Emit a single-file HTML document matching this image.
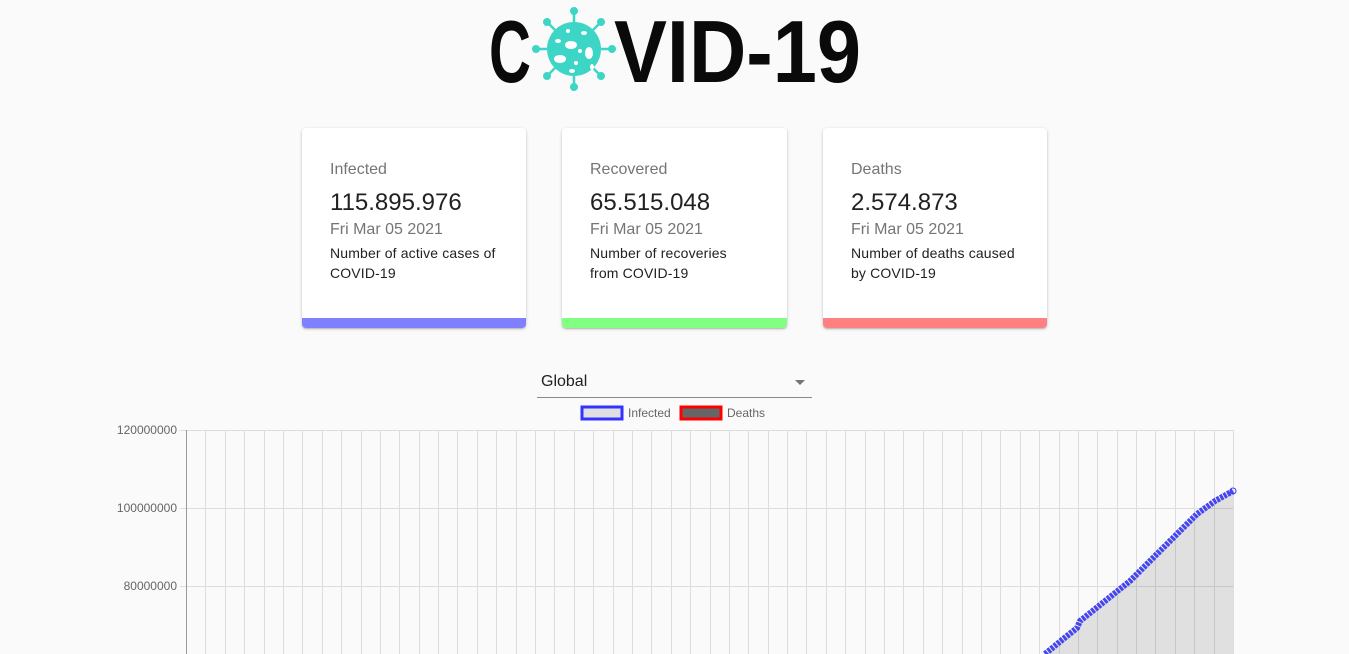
<!DOCTYPE html>
<html><head><meta charset="utf-8"><style>
body{margin:0;background:#fafafa;font-family:"Liberation Sans",sans-serif;width:1349px;height:654px;overflow:hidden;position:relative}
.card{position:absolute;top:128px;width:224px;height:200px;background:#fff;border-radius:4px;box-shadow:0 1px 3px rgba(0,0,0,.2),0 1px 1px rgba(0,0,0,.14);overflow:hidden}
.card .in{padding:33px 28px 0 28px}
.t{color:#757575;font-size:16px;margin-bottom:10px}
.n{color:#212121;font-size:24px;margin-bottom:4px}
.d{color:#757575;font-size:16px;margin-bottom:4px}
.p{color:#212121;font-size:14px;line-height:20px;letter-spacing:.15px;white-space:nowrap}
.bar{position:absolute;left:0;right:0;bottom:0;height:10px}
</style></head><body>
<svg style="position:absolute;left:0;top:0" width="1349" height="100">
<text x="489" y="82" font-family="Liberation Sans Narrow, Liberation Sans, sans-serif" font-weight="bold" font-size="88" textLength="42" lengthAdjust="spacingAndGlyphs" fill="#0a0a0a">C</text>
<text x="614" y="82" font-family="Liberation Sans Narrow, Liberation Sans, sans-serif" font-weight="bold" font-size="88" textLength="247" lengthAdjust="spacingAndGlyphs" fill="#0a0a0a">VID-19</text>
<g transform="translate(574,49)" fill="#3dd6c6" stroke="#3dd6c6">
<circle r="27" stroke="none"/>
<g stroke-width="2.5">
<line x1="0" y1="-27" x2="0" y2="-37"/><line x1="0" y1="27" x2="0" y2="37"/>
<line x1="-27" y1="0" x2="-37" y2="0"/><line x1="27" y1="0" x2="37" y2="0"/>
<line x1="19" y1="19" x2="26" y2="26"/><line x1="-19" y1="19" x2="-26" y2="26"/>
<line x1="19" y1="-19" x2="26" y2="-26"/><line x1="-19" y1="-19" x2="-26" y2="-26"/>
</g>
<circle cx="0" cy="-38" r="3.5"/><circle cx="0" cy="38" r="3.5"/><circle cx="-38" cy="0" r="3.5"/><circle cx="38" cy="0" r="3.5"/>
<circle cx="27" cy="27" r="3.5"/><circle cx="-27" cy="27" r="3.5"/><circle cx="27" cy="-27" r="3.5"/><circle cx="-27" cy="-27" r="3.5"/>
<g fill="#fff" stroke="none">
<ellipse cx="-3" cy="-4" rx="6" ry="4"/><ellipse cx="-16" cy="-8" rx="3" ry="2"/><ellipse cx="10" cy="-16" rx="3" ry="2"/>
<ellipse cx="15" cy="4" rx="4" ry="6"/><ellipse cx="-14" cy="10" rx="6" ry="4"/><ellipse cx="2" cy="14" rx="2" ry="2"/>
<ellipse cx="-6" cy="-18" rx="2" ry="2"/><ellipse cx="6" cy="2" rx="2" ry="2"/><ellipse cx="-2" cy="22" rx="3" ry="2"/><ellipse cx="18" cy="18" rx="2" ry="3"/>
</g></g>
</svg>
<div class="card" style="left:302px"><div class="in"><div class="t">Infected</div><div class="n">115.895.976</div><div class="d">Fri Mar 05 2021</div><div class="p">Number of active cases of<br>COVID-19</div></div><div class="bar" style="background:#8080ff"></div></div>
<div class="card" style="left:562px;width:225px"><div class="in"><div class="t">Recovered</div><div class="n">65.515.048</div><div class="d">Fri Mar 05 2021</div><div class="p">Number of recoveries<br>from COVID-19</div></div><div class="bar" style="background:#80ff80"></div></div>
<div class="card" style="left:823px"><div class="in"><div class="t">Deaths</div><div class="n">2.574.873</div><div class="d">Fri Mar 05 2021</div><div class="p">Number of deaths caused<br>by COVID-19</div></div><div class="bar" style="background:#ff8080"></div></div>
<div style="position:absolute;left:537px;top:373px;width:275px;height:25px;border-bottom:1px solid #8a8a8a;font-size:16px;color:#212121;padding-left:4px;box-sizing:border-box">Global
<div style="position:absolute;right:7px;top:7px;width:0;height:0;border-left:5px solid transparent;border-right:5px solid transparent;border-top:5px solid #757575"></div></div>
<svg style="position:absolute;left:0;top:400px" width="1349" height="254" font-family="Liberation Sans, sans-serif" font-size="12" fill="#666">
<rect x="582" y="7" width="40" height="12" fill="#e0e0e0" stroke="#3333ff" stroke-width="3"/>
<text x="628" y="17">Infected</text>
<rect x="681" y="7" width="40" height="12" fill="#666" stroke="#ff0000" stroke-width="3"/>
<text x="727" y="17">Deaths</text>
<g id="g" stroke="#ddd" stroke-width="1"></g>
<text x="177" y="34" text-anchor="end">120000000</text>
<text x="177" y="112" text-anchor="end">100000000</text>
<text x="177" y="190" text-anchor="end">80000000</text>
<path d="M1045,254 L1062,240 L1077,228 L1080,221 L1105,201 L1130,181 L1157,154 L1177,134 L1197,114 L1215,101 L1233,91 L1233,254 Z" fill="rgba(0,0,0,0.1)"/>
<path d="M1045,254 L1062,240 L1077,228 L1080,221 L1105,201 L1130,181 L1157,154 L1177,134 L1197,114 L1215,101 L1233,91" fill="none" stroke="#4646ee" stroke-width="6" stroke-dasharray="3 1"/>
<circle cx="1233" cy="91" r="3" fill="none" stroke="#3a3aee"/>
<line x1="186.5" y1="30" x2="186.5" y2="254" stroke="#999"/>
</svg>
<script>
var g=document.getElementById('g'),s='';
for(var i=1;i<=54;i++){var x=Math.round(186+i*1047/54)+.5;s+='<line x1="'+x+'" y1="30" x2="'+x+'" y2="254"/>';}
[30,108,186].forEach(function(y){s+='<line x1="180" y1="'+(y+.5)+'" x2="1233" y2="'+(y+.5)+'"/>';});
g.innerHTML=s;
</script>
</body></html>
